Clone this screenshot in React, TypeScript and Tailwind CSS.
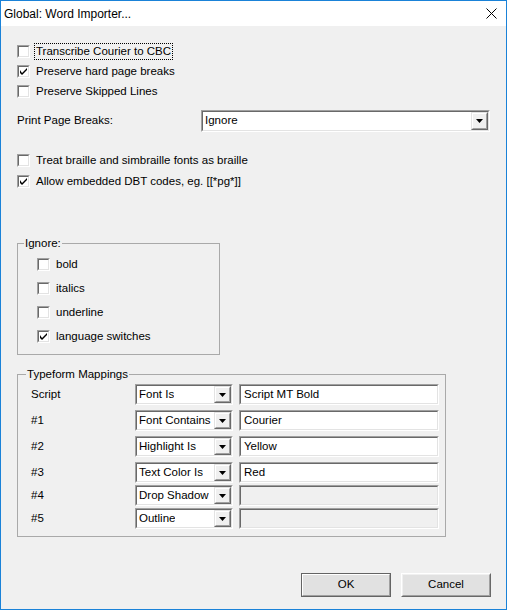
import React from "react";

const FONT = { fontFamily: '"Liberation Sans", Arial, sans-serif' };

function Check({ checked }: { checked?: boolean }) {
  return (
    <div className="w-[13px] h-[13px] shrink-0 border border-t-[#a0a0a0] border-l-[#a0a0a0] border-r-white border-b-white">
      <div className="w-full h-full bg-white border border-t-[#696969] border-l-[#696969] border-r-[#e3e3e3] border-b-[#e3e3e3] flex items-center justify-center">
        {checked && (
          <svg width="7" height="7" viewBox="0 0 7 7">
            <path d="M0 2 L0 5 L2 7 L7 2 L7 0 L2 5 Z" fill="#000" />
          </svg>
        )}
      </div>
    </div>
  );
}

function CheckRow({
  label,
  checked,
  focused,
  className = "h-[20px]",
}: {
  label: string;
  checked?: boolean;
  focused?: boolean;
  className?: string;
}) {
  return (
    <div className={`flex items-center ${className}`}>
      <Check checked={checked} />
      <span
        className={`ml-[4px] px-[1px] leading-[15px] border ${
          focused ? "border-dotted border-black" : "border-transparent"
        }`}
      >
        {label}
      </span>
    </div>
  );
}

function Sunken({
  className,
  children,
  disabled,
}: {
  className: string;
  children?: React.ReactNode;
  disabled?: boolean;
}) {
  return (
    <div
      className={`${className} border border-t-[#a0a0a0] border-l-[#a0a0a0] border-r-white border-b-white`}
    >
      <div
        className={`w-full h-full flex items-center border border-t-[#696969] border-l-[#696969] border-r-[#e3e3e3] border-b-[#e3e3e3] ${
          disabled ? "bg-[#f0f0f0]" : "bg-white"
        }`}
      >
        {children}
      </div>
    </div>
  );
}

function ArrowButton() {
  return (
    <div className="ml-auto h-full w-[17px] shrink-0 border border-t-[#e3e3e3] border-l-[#e3e3e3] border-r-[#696969] border-b-[#696969]">
      <div className="w-full h-full bg-[#f0f0f0] border border-t-white border-l-white border-r-[#a0a0a0] border-b-[#a0a0a0] flex items-center justify-center">
        <svg width="7" height="4" viewBox="0 0 7 4">
          <path d="M0 0 L7 0 L3.5 4 Z" fill="#000" />
        </svg>
      </div>
    </div>
  );
}

function Select({ value, className }: { value: string; className: string }) {
  return (
    <Sunken className={className}>
      <span className="pl-[2px] whitespace-nowrap overflow-hidden">{value}</span>
      <ArrowButton />
    </Sunken>
  );
}

const mappings = [
  { label: "Script", kind: "Font Is", value: "Script MT Bold", h: "h-[26px]" },
  { label: "#1", kind: "Font Contains", value: "Courier", h: "h-[26px]" },
  { label: "#2", kind: "Highlight Is", value: "Yellow", h: "h-[26px]" },
  { label: "#3", kind: "Text Color Is", value: "Red", h: "h-[23px]" },
  { label: "#4", kind: "Drop Shadow", value: "", h: "h-[23px]", disabled: true },
  { label: "#5", kind: "Outline", value: "", h: "h-[23px]", disabled: true },
];

function DialogButton({ label, isDefault }: { label: string; isDefault?: boolean }) {
  const outer = isDefault
    ? "border border-[#646464]"
    : "border border-t-white border-l-white border-r-[#696969] border-b-[#696969]";
  return (
    <div className={`w-[90px] h-[24px] ${outer}`}>
      <div
        className={`w-full h-full flex items-center justify-center bg-[#e1e1e1] border ${
          isDefault
            ? "border-t-white border-l-white border-r-[#a0a0a0] border-b-[#a0a0a0]"
            : "border-t-[#f0f0f0] border-l-[#f0f0f0] border-r-[#a0a0a0] border-b-[#a0a0a0]"
        }`}
      >
        {label}
      </div>
    </div>
  );
}

export default function App() {
  return (
    <div
      style={FONT}
      className="w-[507px] h-[610px] border border-[#1a82d8] bg-[#f0f0f0] flex flex-col text-[11.5px] text-black"
    >
      <div className="h-[25px] bg-white flex items-center pl-[3px] pr-[9px] shrink-0">
        <span className="text-[12px]">Global: Word Importer...</span>
        <svg className="ml-auto" width="11" height="11" viewBox="0 0 11 11">
          <path d="M0.5 0.5 L10.5 10.5 M10.5 0.5 L0.5 10.5" stroke="#000" strokeWidth="1" />
        </svg>
      </div>

      <div className="flex-1 flex flex-col pl-[16px] pr-[15px]">
        <div className="mt-[15px]">
          <CheckRow label="Transcribe Courier to CBC" focused />
          <CheckRow label="Preserve hard page breaks" checked />
          <CheckRow label="Preserve Skipped Lines" />
        </div>

        <div className="mt-[9px] flex items-center h-[22px]">
          <span className="w-[184px]">Print Page Breaks:</span>
          <Select value="Ignore" className="w-[289px] h-[22px]" />
        </div>

        <div className="mt-[18px]">
          <CheckRow label="Treat braille and simbraille fonts as braille" className="h-[21px]" />
          <CheckRow label="Allow embedded DBT codes, eg. [[*pg*]]" checked className="h-[21px]" />
        </div>

        <fieldset className="mt-[44px] w-[203px] border border-[#a9a9a9]">
          <legend className="ml-[6px] px-[1px] leading-[14px]">Ignore:</legend>
          <div className="pt-[2px] pl-[19px] pb-[6px]">
            <CheckRow label="bold" className="h-[24px]" />
            <CheckRow label="italics" className="h-[24px]" />
            <CheckRow label="underline" className="h-[24px]" />
            <CheckRow label="language switches" checked className="h-[24px]" />
          </div>
        </fieldset>

        <fieldset className="mt-[12px] w-[429px] border border-[#a9a9a9]">
          <legend className="ml-[8px] px-[1px] leading-[14px]">Typeform Mappings</legend>
          <div className="pt-[3px] pl-[13px] pb-[5px]">
            {mappings.map((m) => (
              <div key={m.label} className={`flex items-start ${m.h}`}>
                <span className="w-[104px] h-[21px] flex items-center">{m.label}</span>
                <Select value={m.kind} className="w-[98px] h-[21px]" />
                <Sunken className="ml-[6px] w-[200px] h-[21px]" disabled={m.disabled}>
                  <span className="pl-[3px]">{m.value}</span>
                </Sunken>
              </div>
            ))}
          </div>
        </fieldset>

        <div className="mt-auto mb-[12px] flex justify-end gap-[10px]">
          <DialogButton label="OK" isDefault />
          <DialogButton label="Cancel" />
        </div>
      </div>
    </div>
  );
}
